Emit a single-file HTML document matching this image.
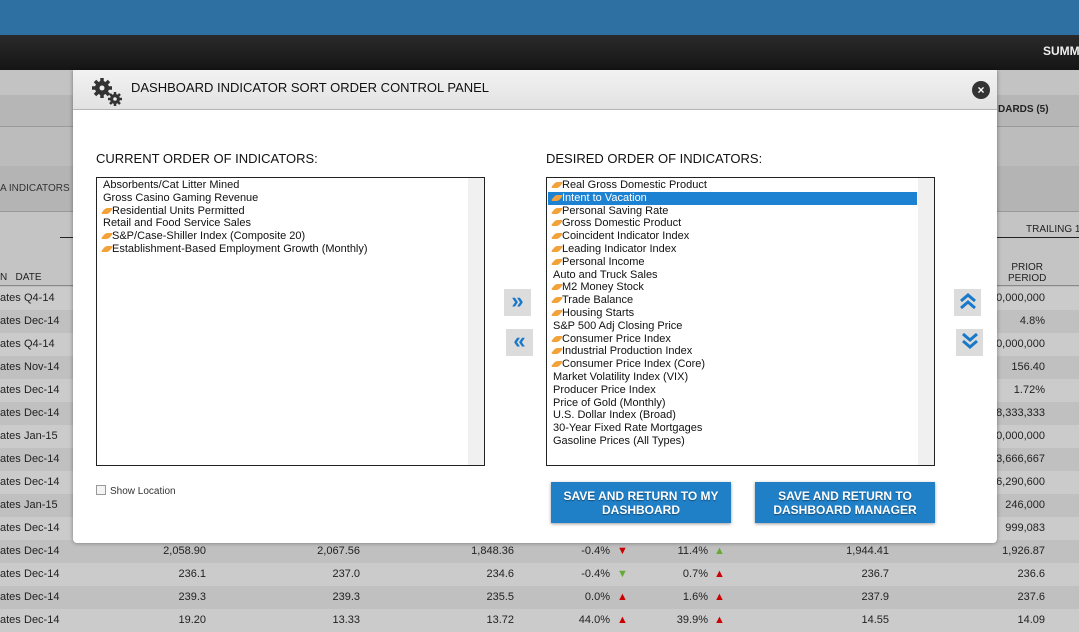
<!DOCTYPE html>
<html><head><meta charset="utf-8"><style>
*{margin:0;padding:0;box-sizing:border-box}
body{width:1079px;height:622px;overflow:hidden;position:relative;font-family:"Liberation Sans",Arial,sans-serif;background:#bdbdbd}
.abs{position:absolute;white-space:nowrap}
.row{position:absolute;left:0;width:1079px;height:23px;font-size:11px;color:#222}
.row span{position:absolute;top:5px}
.list{position:absolute;border:1px solid #222;background:#fff;font-size:11px;color:#111;line-height:12.8px;padding:1px 0 0 6px;white-space:nowrap}
.sb{position:absolute;right:0;top:0;width:16px;height:100%;background:#f0f0f0}
.ic{display:inline-block;width:8px;height:6px;background:#f3a23a;transform:skewX(-40deg);margin-right:1px;border-radius:2px}
.sel{background:#1e82d2;color:#fff;margin-left:-5px;padding-left:5px;width:369px}
.btn{position:absolute;background:#1f7fc7;color:#fff;font-weight:bold;font-size:12px;text-align:center;line-height:14px;padding-top:7px;box-shadow:0 1px 3px rgba(0,0,0,.4);text-shadow:0 1px 1px rgba(0,0,0,.4)}
.arr{position:absolute;width:27px;height:27px;background:#dcdcdc;color:#1a78c8;font-size:22px;font-weight:bold;text-align:center;line-height:24px}
</style></head><body>
<div class="abs" style="left:0;top:0;width:1079px;height:35px;background:#2d70a1"></div>
<div class="abs" style="left:0;top:35px;width:1079px;height:35px;background:linear-gradient(#2a2a2a,#151515)"></div>
<div class="abs" style="left:1043px;top:44px;color:#eee;font-weight:bold;font-size:12px">SUMM</div>
<div class="abs" style="left:0;top:70px;width:1079px;height:25px;background:#c3c3c3"></div>
<div class="abs" style="left:0;top:95px;width:1079px;height:32px;background:#b6b6b6;border-bottom:1px solid #9a9a9a"></div>
<div class="abs" style="left:0;top:128px;width:1079px;height:38px;background:#bcbcbc"></div>
<div class="abs" style="left:0;top:166px;width:1079px;height:46px;background:#b4b4b4;border-bottom:1px solid #999"></div>
<div class="abs" style="left:0;top:212px;width:1079px;height:74px;background:#c4c4c4;border-bottom:1px solid #888"></div>
<div class="abs" style="left:998px;top:104px;font-size:10px;font-weight:bold;color:#222">DARDS (5)</div>
<div class="abs" style="left:0;top:183px;font-size:10px;color:#333">A INDICATORS</div>
<div class="abs" style="left:60px;top:237px;width:14px;border-top:1px solid #222"></div>
<div class="abs" style="left:997px;top:237px;width:82px;border-top:1px solid #222"></div>
<div class="abs" style="left:1026px;top:224px;font-size:10px;color:#222">TRAILING 1</div>
<div class="abs" style="left:0;top:272px;font-size:10px;color:#222">N &nbsp; DATE</div>
<div class="abs" style="left:1008px;top:262px;font-size:10px;color:#222;text-align:center;line-height:11px">PRIOR<br>PERIOD</div>
<div id="rows"></div>
<script>
var d=[["Q4-14","0,000,000"],["Dec-14","4.8%"],["Q4-14","0,000,000"],["Nov-14","156.40"],["Dec-14","1.72%"],["Dec-14","8,333,333"],["Jan-15","0,000,000"],["Dec-14","3,666,667"],["Dec-14","6,290,600"],["Jan-15","246,000"],["Dec-14","999,083"]];
var h="";
var ext=[["2,058.90","2,067.56","1,848.36","-0.4%","#c00","▼","11.4%","#6a3","▲","1,944.41","1,926.87"],["236.1","237.0","234.6","-0.4%","#6a3","▼","0.7%","#c00","▲","236.7","236.6"],["239.3","239.3","235.5","0.0%","#c00","▲","1.6%","#c00","▲","237.9","237.6"],["19.20","13.33","13.72","44.0%","#c00","▲","39.9%","#c00","▲","14.55","14.09"]];
for(var i=0;i<15;i++){var y=287+i*23;var bg=i%2?"#c0c0c0":"#cbcbcb";
var date=i<11?d[i][0]:"Dec-14";
h+='<div class="row" style="top:'+y+'px;background:'+bg+'"><span style="left:0">ates</span><span style="left:24px">'+date+'</span>';
if(i<11)h+='<span style="right:34px">'+d[i][1]+'</span>';
else{var e=ext[i-11];
h+='<span style="right:873px">'+e[0]+'</span><span style="right:719px">'+e[1]+'</span><span style="right:565px">'+e[2]+'</span><span style="right:469px">'+e[3]+'</span><span style="left:617px;color:'+e[4]+'">'+e[5]+'</span><span style="right:371px">'+e[6]+'</span><span style="left:714px;color:'+e[7]+'">'+e[8]+'</span><span style="right:190px">'+e[9]+'</span><span style="right:34px">'+e[10]+'</span>';}
h+='</div>';}
document.getElementById("rows").innerHTML=h;
</script>
<div class="abs" style="left:73px;top:70px;width:924px;height:473px;background:#fff;border-radius:0 0 4px 4px;box-shadow:0 0 4px rgba(0,0,0,.4)">
<div class="abs" style="left:0;top:0;width:924px;height:40px;background:linear-gradient(#f2f2f2,#e2e2e2);border-bottom:1px solid #b5b5b5"></div>
<svg class="abs" style="left:18px;top:7px" width="34" height="30" viewBox="0 0 34 30"><g fill="#333"><circle cx="11" cy="11" r="7"/><g stroke="#333" stroke-width="3.5"><line x1="11" y1="1" x2="11" y2="21"/><line x1="1" y1="11" x2="21" y2="11"/><line x1="4" y1="4" x2="18" y2="18"/><line x1="18" y1="4" x2="4" y2="18"/></g><circle cx="11" cy="11" r="2.5" fill="#eee"/><circle cx="24" cy="22" r="5"/><g stroke="#333" stroke-width="2.5"><line x1="24" y1="15" x2="24" y2="29"/><line x1="17" y1="22" x2="31" y2="22"/><line x1="19" y1="17" x2="29" y2="27"/><line x1="29" y1="17" x2="19" y2="27"/></g><circle cx="24" cy="22" r="1.8" fill="#eee"/></g></svg>
<div class="abs" style="left:58px;top:10px;font-size:13px;color:#111">DASHBOARD INDICATOR SORT ORDER CONTROL PANEL</div>
<div class="abs" style="left:899px;top:11px;width:18px;height:18px;border-radius:50%;background:#333;color:#fff;font-size:12px;font-weight:bold;text-align:center;line-height:18px">×</div>
<div class="abs" style="left:23px;top:81px;font-size:13px;color:#111">CURRENT ORDER OF INDICATORS:</div>
<div class="abs" style="left:473px;top:81px;font-size:13px;color:#111">DESIRED ORDER OF INDICATORS:</div>
<div class="abs" style="left:23px;top:415px;font-size:10px;color:#333"><span style="display:inline-block;width:10px;height:10px;border:1px solid #999;background:#f4f4f4;vertical-align:-1px;margin-right:4px"></span>Show Location</div>
</div>
<div class="list" style="left:96px;top:177px;width:389px;height:289px"><div class="sb"></div>
Absorbents/Cat Litter Mined<br>Gross Casino Gaming Revenue<br><i class="ic"></i>Residential Units Permitted<br>Retail and Food Service Sales<br><i class="ic"></i>S&amp;P/Case-Shiller Index (Composite 20)<br><i class="ic"></i>Establishment-Based Employment Growth (Monthly)</div>
<div class="list" style="left:546px;top:177px;width:389px;height:289px"><div class="sb"></div>
<i class="ic"></i>Real Gross Domestic Product<div class="sel"><i class="ic"></i>Intent to Vacation</div><i class="ic"></i>Personal Saving Rate<br><i class="ic"></i>Gross Domestic Product<br><i class="ic"></i>Coincident Indicator Index<br><i class="ic"></i>Leading Indicator Index<br><i class="ic"></i>Personal Income<br>Auto and Truck Sales<br><i class="ic"></i>M2 Money Stock<br><i class="ic"></i>Trade Balance<br><i class="ic"></i>Housing Starts<br>S&amp;P 500 Adj Closing Price<br><i class="ic"></i>Consumer Price Index<br><i class="ic"></i>Industrial Production Index<br><i class="ic"></i>Consumer Price Index (Core)<br>Market Volatility Index (VIX)<br>Producer Price Index<br>Price of Gold (Monthly)<br>U.S. Dollar Index (Broad)<br>30-Year Fixed Rate Mortgages<br>Gasoline Prices (All Types)</div>
<div class="arr" style="left:504px;top:289px">»</div>
<div class="arr" style="left:506px;top:329px">«</div>
<div class="arr" style="left:954px;top:289px;line-height:28px"><svg width="18" height="18" viewBox="0 0 18 18" fill="none" stroke="#1a78c8" stroke-width="3"><path d="M2 9l7-6 7 6M2 16l7-6 7 6"/></svg></div>
<div class="arr" style="left:956px;top:329px;line-height:28px"><svg width="18" height="18" viewBox="0 0 18 18" fill="none" stroke="#1a78c8" stroke-width="3"><path d="M2 2l7 6 7-6M2 9l7 6 7-6"/></svg></div>
<div class="btn" style="left:551px;top:482px;width:180px;height:41px">SAVE AND RETURN TO MY<br>DASHBOARD</div>
<div class="btn" style="left:755px;top:482px;width:180px;height:41px">SAVE AND RETURN TO<br>DASHBOARD MANAGER</div>
</body></html>
